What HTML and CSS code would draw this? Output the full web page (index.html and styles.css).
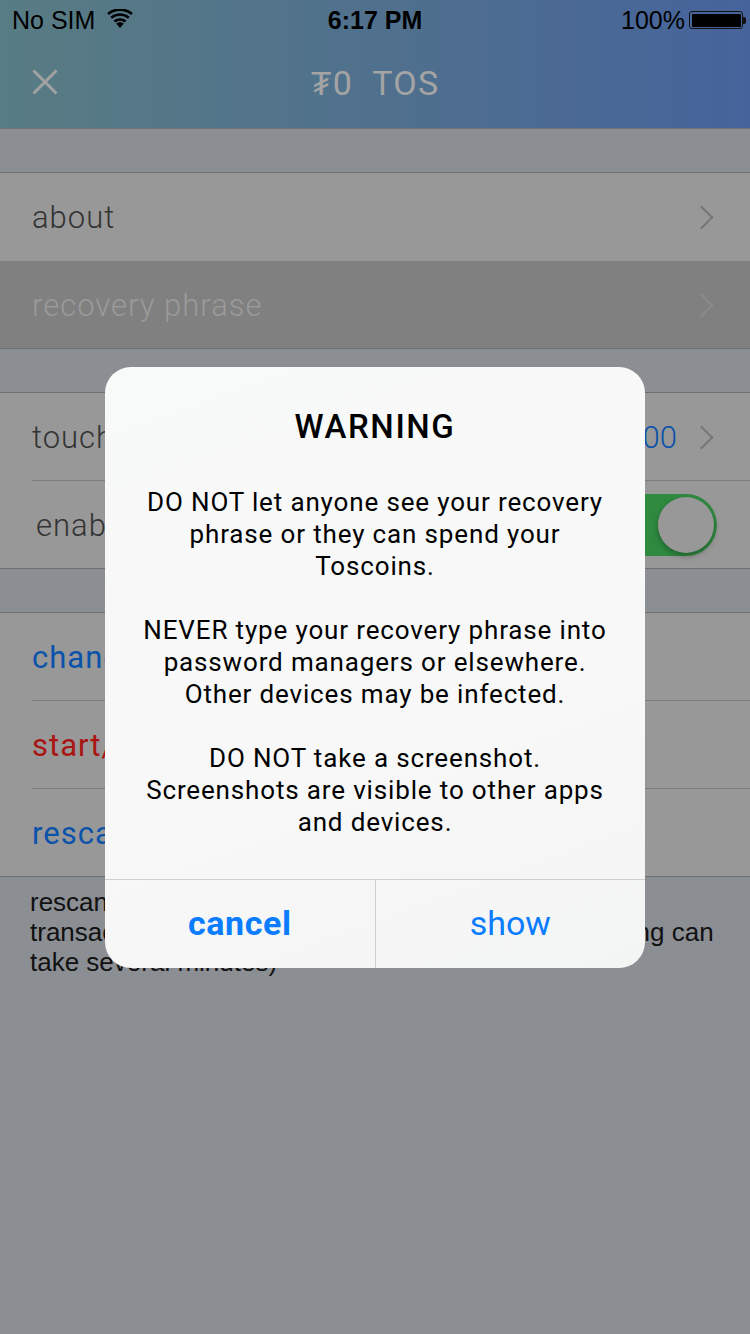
FILE: index.html
```html
<!DOCTYPE html>
<html>
<head>
<meta charset="utf-8">
<link rel="stylesheet" href="styles.css">
</head>
<body>
<div class="screen">
  <header class="top">
    <div class="status">
      <div class="st-left">
        <span>No SIM</span>
        <svg class="wifi" width="26" height="20" viewBox="0 0 26 20">
          <path d="M13 19 L9.2 14.6 A5.8 5.8 0 0 1 16.8 14.6 Z" fill="#000"/>
          <path d="M7.4 12.5 A8.6 8.6 0 0 1 18.6 12.5" fill="none" stroke="#000" stroke-width="2.6"/>
          <path d="M4.2 8.8 A13.4 13.4 0 0 1 21.8 8.8" fill="none" stroke="#000" stroke-width="2.6"/>
          <path d="M1 5.1 A18.2 18.2 0 0 1 25 5.1" fill="none" stroke="#000" stroke-width="2.6"/>
        </svg>
      </div>
      <div class="st-time">6:17 PM</div>
      <div class="st-right">
        <span>100%</span>
        <div class="battery"><div class="bat-fill"></div></div>
        <div class="bat-nub"></div>
      </div>
    </div>
    <div class="nav">
      <svg class="close" width="26" height="26" viewBox="0 0 26 26">
        <path d="M1.5 1.5 L24.5 24.5 M24.5 1.5 L1.5 24.5" stroke="#a2a2a2" stroke-width="3" fill="none"/>
      </svg>
      <div class="nav-title">₮0&nbsp;&nbsp;TOS</div>
    </div>
  </header>

  <section class="group first">
    <div class="row nosep"><span class="label">about</span><span class="chev"></span></div>
    <div class="row selected last"><span class="label">recovery phrase</span><span class="chev"></span></div>
  </section>

  <section class="group">
    <div class="row"><span class="label">touch id spending limit</span><span class="value">₮1,000</span><span class="chev"></span></div>
    <div class="row last"><span class="label indent">enable touch id</span><span class="toggle"><span class="knob"></span></span></div>
  </section>

  <section class="group">
    <div class="row"><span class="label blue">change passcode</span></div>
    <div class="row"><span class="label red">start/recover another wallet</span></div>
    <div class="row last"><span class="label blue">rescan blockchain</span></div>
  </section>

  <p class="footnote">rescan blockchain if you think you may have missing<br>transactions, or are having trouble sending (rescanning can<br>take several minutes)</p>

  <div class="alert">
    <div class="alert-body">
      <div class="alert-title">WARNING</div>
      <p class="alert-msg">DO NOT let anyone see your recovery<br>phrase or they can spend your<br>Toscoins.</p>
      <p class="alert-msg">NEVER type your recovery phrase into<br>password managers or elsewhere.<br>Other devices may be infected.</p>
      <p class="alert-msg">DO NOT take a screenshot.<br>Screenshots are visible to other apps<br>and devices.</p>
    </div>
    <div class="alert-actions">
      <div class="btn bold">cancel</div>
      <div class="btn">show</div>
    </div>
  </div>
</div>
</body>
</html>
```

FILE: styles.css
```css
* { box-sizing: border-box; }
html, body { margin: 0; padding: 0; }
body {
  width: 750px;
  height: 1334px;
  background: #8b8e93;
  font-family: "Liberation Sans", Arial, sans-serif;
  overflow: hidden;
}
.screen {
  position: relative;
  width: 750px;
  height: 1334px;
}
.top {
  height: 129px;
  background: linear-gradient(90deg, #587c83 0%, #4f6f8e 55%, #46639b 100%);
  border-bottom: 1px solid #6f7176;
}
.status {
  height: 40px;
  display: flex;
  align-items: center;
  justify-content: space-between;
  padding: 0 4px 0 12px;
  font-size: 25px;
  color: #000;
  position: relative;
}
.st-left { display: flex; align-items: center; gap: 12px; width: 200px; }
.wifi { margin-top: -2px; }
.st-time {
  font-weight: bold;
  font-size: 25px;
  position: absolute;
  left: 0; right: 0;
  text-align: center;
  pointer-events: none;
}
.st-right { display: flex; align-items: center; justify-content: flex-end; width: 200px; }
.st-right span { margin-right: 4px; }
.battery {
  width: 54px;
  height: 18px;
  border: 1.5px solid #111;
  border-radius: 3px;
  padding: 1.5px;
}
.bat-fill { width: 100%; height: 100%; background: #000; border-radius: 1px; }
.bat-nub { width: 3px; height: 7px; background: #111; border-radius: 0 2px 2px 0; }
.nav {
  height: 88px;
  display: flex;
  align-items: center;
  justify-content: center;
  position: relative;
}
.close { position: absolute; left: 32px; top: 29px; }
.nav-title {
  font-family: Roboto, "Liberation Sans", sans-serif;
  font-size: 34px;
  letter-spacing: 1.2px;
  color: #a4a4a4;
  margin-top: -2px;
}
.group {
  margin-top: 43px;
  background: #989898;
  border-top: 1px solid #6f6f6f;
}
.row {
  height: 88px;
  display: flex;
  align-items: center;
  padding: 0 32px;
  position: relative;
  font-family: Roboto, "Liberation Sans", sans-serif;
  font-weight: 300;
  font-size: 31px;
  letter-spacing: 1px;
  color: #333;
}
.row::after {
  content: "";
  position: absolute;
  left: 32px; right: 0; bottom: 0;
  height: 1px;
  background: #7c7c7c;
}
.row.nosep::after { display: none; }
.row.last::after { left: 0; background: #6f6f6f; }
.row.selected { background: #808080; }
.row.selected .label { color: #9a9a9a; }
.row.selected .chev { border-color: #8a8a8a; }
.label { flex: 1; white-space: nowrap; }
.label.indent { padding-left: 4px; }
.label.blue { color: #0a52aa; font-weight: 400; }
.label.red { color: #a81512; font-weight: 400; }
.value { color: #0a52aa; font-size: 31px; margin-right: 16px; letter-spacing: 0; }
.chev {
  width: 17px; height: 17px;
  border-top: 2px solid #767676;
  border-right: 2px solid #767676;
  transform: rotate(45deg);
  margin-right: 8px;
}
.toggle {
  width: 102px;
  height: 62px;
  border-radius: 31px;
  background: #2f8a40;
  display: flex;
  align-items: center;
  justify-content: flex-end;
  padding-right: 3px;
  margin-right: 1px;
}
.knob {
  width: 56px; height: 56px;
  border-radius: 50%;
  background: #989898;
  box-shadow: 0 3px 6px rgba(0,0,0,0.3);
}
.footnote {
  margin: 10px 0 0;
  padding: 0 32px 0 30px;
  font-family: "Liberation Sans", Arial, sans-serif;
  font-size: 26px;
  line-height: 30px;
  color: #111;
  white-space: nowrap;
}
.alert {
  position: absolute;
  left: 105px;
  top: 367px;
  width: 540px;
  height: 601px;
  border-radius: 26px;
  background: linear-gradient(160deg, #f8f9f9 0%, #f7f8f7 60%, #f3f4f4 100%);
  display: flex;
  flex-direction: column;
  overflow: hidden;
  font-family: Roboto, "Liberation Sans", sans-serif;
}
.alert-body {
  flex: 1;
  padding: 40px 10px 0;
  text-align: center;
  color: #000;
}
.alert-title {
  font-size: 33px;
  font-weight: 500;
  letter-spacing: 1.6px;
  line-height: 40px;
  margin-bottom: 39px;
}
.alert-msg {
  margin: 0 0 32px;
  font-size: 26px;
  letter-spacing: 0.85px;
  line-height: 32px;
  white-space: nowrap;
}
.alert-actions {
  height: 89px;
  display: flex;
  border-top: 1px solid #cdcfd2;
}
.btn {
  flex: 1;
  display: flex;
  align-items: center;
  justify-content: center;
  color: #0a7cff;
  font-size: 34px;
  padding-bottom: 2px;
}
.btn + .btn { border-left: 1px solid #cdcfd2; }
.btn.bold { font-weight: 700; letter-spacing: 0.6px; }
```
